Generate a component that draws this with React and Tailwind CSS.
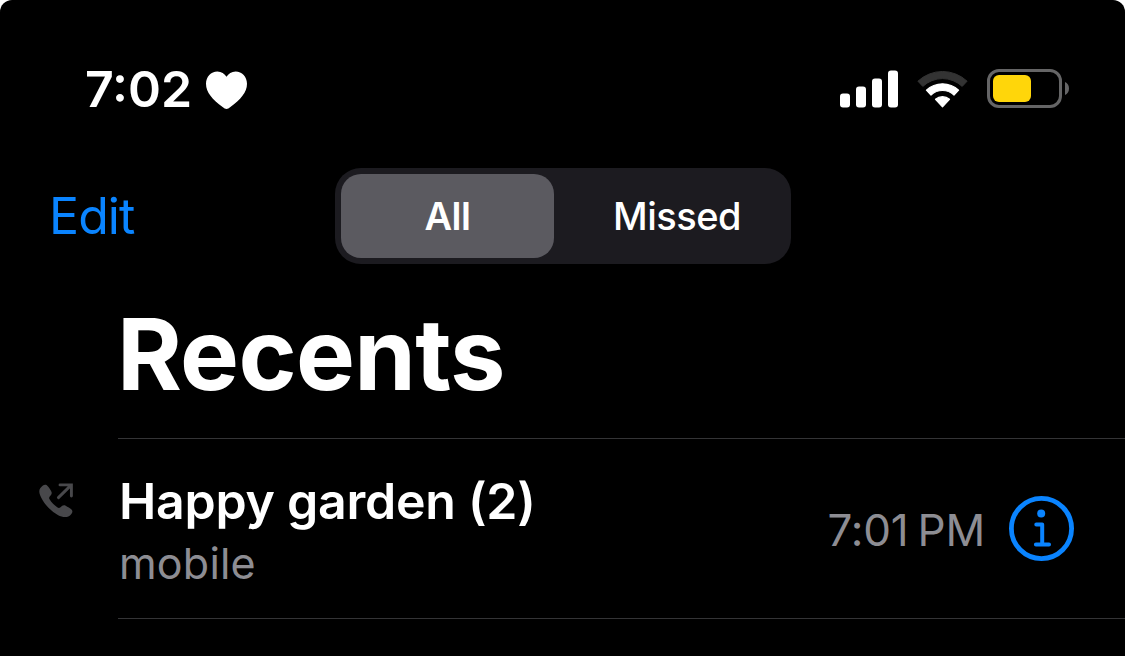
import React from 'react';

const tabs = [
  { label: 'All', style: 'w-[213px] rounded-[20px] bg-[#5b5a60] font-semibold' },
  { label: 'Missed', style: 'ml-[9px] flex-1 font-medium' },
];

const calls = [
  { name: 'Happy garden (2)', type: 'mobile', time: '7:01', period: 'PM' },
];

const SignalIcon = () => (
  <svg width="58" height="38" viewBox="0 0 58 38" fill="white">
    <rect x="0" y="23.5" width="10" height="14" rx="3" />
    <rect x="16" y="16.5" width="10" height="21" rx="3" />
    <rect x="32" y="8.5" width="10" height="29" rx="3" />
    <rect x="48" y="0.5" width="10" height="37" rx="3" />
  </svg>
);

const WifiIcon = () => (
  <svg width="51" height="38" viewBox="0 0 51 38">
    <path d="M0.9 11.2A36 36 0 0 1 50.1 11.2L45.2 16.4A28.8 28.8 0 0 0 5.8 16.4Z" fill="#333333" stroke="#333333" strokeWidth="1" strokeLinejoin="round" />
    <path d="M9.4 20.2A23.6 23.6 0 0 1 41.6 20.2L37 25A17 17 0 0 0 14 25Z" fill="white" stroke="white" strokeWidth="1.2" strokeLinejoin="round" />
    <path d="M18.5 29.3A10.5 10.5 0 0 1 32.5 29.3L25.5 36.9Z" fill="white" stroke="white" strokeWidth="1.2" strokeLinejoin="round" />
  </svg>
);

const BatteryIcon = () => (
  <svg width="83" height="39" viewBox="0 0 83 39">
    <rect x="1.5" y="1.5" width="72" height="36" rx="10.5" fill="none" stroke="#656566" strokeWidth="3" />
    <rect x="6" y="6" width="38" height="27" rx="6" fill="#ffd60a" />
    <path d="M78 13C80.5 14 82 16.5 82 19.5S80.5 25 78 26Z" fill="#656566" />
  </svg>
);

const HeartIcon = () => (
  <svg width="41" height="39" viewBox="0 0 41 39" fill="white">
    <path d="M20.5 38C19.4 38 18 37 16.6 36C6.5 28.6 0 21.5 0 12.8C0 5.5 5 0.4 11.4 0.4C15.4 0.4 18.6 2.5 20.5 5.8C22.4 2.5 25.6 0.4 29.6 0.4C36 0.4 41 5.5 41 12.8C41 21.5 34.5 28.6 24.4 36C23 37 21.6 38 20.5 38Z" />
  </svg>
);

const OutgoingCallIcon = () => (
  <svg width="36" height="36" viewBox="0 0 36 36">
    <path
      d="M1.2 5.3C3 2.7 5.5 0.9 7.5 2C9.3 3.2 11 6.2 12.2 8.2C13.4 10.4 12.4 11.6 10.9 13.3C9.9 14.5 9.9 15.3 10.7 16.5C12.6 19.4 15.2 22.2 18.2 24.3C19.5 25.2 20.4 25.2 21.5 24.2C23.2 22.5 24.6 21.6 26.7 22.7C28.7 23.8 31 25.2 32.5 26.6C34.4 28.4 33 31 31 32.5C27.8 35 23.4 34.4 18.8 32C13.2 28.9 7 23 3.5 17C0.5 11.8-0.7 8.2 1.2 5.3Z"
      fill="#48484b"
    />
    <path d="M19.4 14.6L31.6 2.6M21 1.9H32.4V13" fill="none" stroke="#48484b" strokeWidth="2.9" strokeLinecap="round" />
  </svg>
);

const InfoIcon = () => (
  <svg width="65" height="65" viewBox="0 0 65 65" fill="none" stroke="#0a84ff">
    <circle cx="32.5" cy="32.5" r="30.1" strokeWidth="4.8" />
    <circle cx="32.2" cy="17.4" r="4" fill="#0a84ff" stroke="none" />
    <path d="M27.3 28.6H33.2V48.5M26.9 48.5H40" strokeWidth="4" strokeLinecap="round" strokeLinejoin="round" />
  </svg>
);

const StatusBar = () => (
  <header className="flex h-[60px] items-center pr-[55px] pl-[85px]">
    <span className="w-[121px] text-[50px] leading-[60px] font-semibold">7:02</span>
    <div className="pt-0.5">
      <HeartIcon />
    </div>
    <div className="ml-auto flex items-center pb-px">
      <SignalIcon />
      <div className="ml-[19px]">
        <WifiIcon />
      </div>
      <div className="ml-[19px]">
        <BatteryIcon />
      </div>
    </div>
  </header>
);

const App = () => {
  return (
    <div className="h-[656px] w-[1125px] overflow-hidden bg-white font-['Inter',sans-serif] text-white">
      <div className="flex h-full flex-col rounded-t-[12px] bg-black pt-[59px]">
        <StatusBar />

        <nav className="mt-[49px] flex h-24 items-center pl-12">
          <button className="w-[287px] pl-px text-left text-[50px] leading-[60px] tracking-[-0.9px] text-[#0a84ff]">Edit</button>
          <div className="flex h-24 w-[456px] rounded-[26px] bg-[#1c1b20] p-1.5 pr-0">
            {tabs.map((tab) => (
              <button key={tab.label} className={`text-[38px] leading-[84px] tracking-[-0.5px] ${tab.style}`}>
                {tab.label}
              </button>
            ))}
          </div>
        </nav>

        <h1 className="mt-[30px] h-[144px] pl-[117px] text-[99px] leading-[120px] font-bold tracking-[-0.7px]">Recents</h1>

        <ul className="ml-[118px] border-t border-[#343436]">
          {calls.map((call) => (
            <li key={call.name} className="-ml-[118px] flex h-[179px]">
              <div className="w-[119px] pt-11 pl-[39px]">
                <OutgoingCallIcon />
              </div>
              <div className="pt-8">
                <p className="text-[50px] leading-[60px] font-semibold tracking-[-0.25px]">{call.name}</p>
                <p className="mt-0.5 text-[43px] leading-[60px] tracking-[0.2px] text-[#8d8d93]">{call.type}</p>
              </div>
              <div className="ml-auto flex h-[179px] items-center pr-[51px]">
                <p className="mt-[3px] flex gap-[9px] text-[44px] leading-[60px] tracking-[-0.2px] text-[#8d8d93]">
                  <span>{call.time}</span>
                  <span>{call.period}</span>
                </p>
                <button className="ml-6">
                  <InfoIcon />
                </button>
              </div>
            </li>
          ))}
        </ul>
        <div className="ml-[118px] border-t border-[#343436]" />
      </div>
    </div>
  );
};

export default App;
